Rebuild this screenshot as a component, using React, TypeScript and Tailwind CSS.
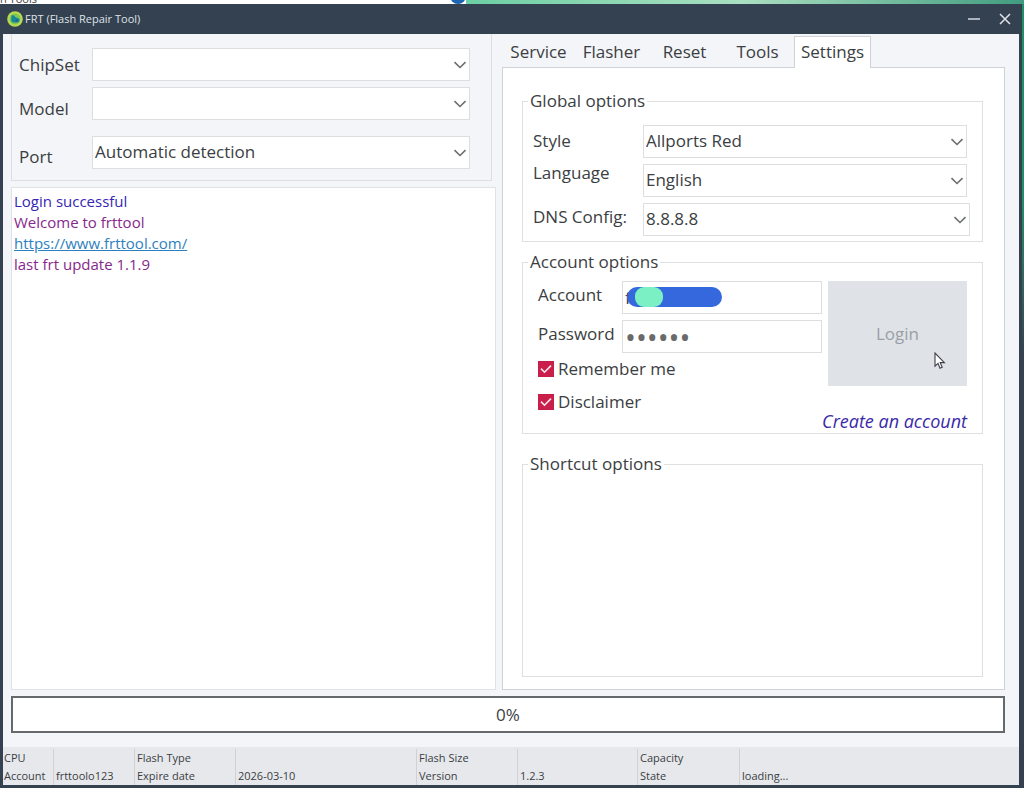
import { ChangeEvent, ReactNode, useState } from "react"
import clsx from "clsx"

const tabs = ["Service", "Flasher", "Reset", "Tools", "Settings"]

const statusRows = [
  ["CPU", "", "Flash Type", "", "Flash Size", "", "Capacity", ""],
  ["Account", "frttoolo123", "Expire date", "2026-03-10", "Version", "1.2.3", "State", "loading..."],
]

interface ComboProps {
  id: string
  options: string[]
}

function Combo({ id, options }: ComboProps) {
  return (
    <div className="relative">
      <select
        id={id}
        className="block h-[33px] w-full appearance-none border border-[#dcdee1] bg-white pr-8 pb-px pl-0.5 text-[17px] leading-6 outline-none"
      >
        {options.map((option) => (
          <option key={option}>{option}</option>
        ))}
      </select>
      <svg viewBox="0 0 14 8" className="pointer-events-none absolute top-[13px] right-[3px] h-2 w-3.5" fill="none" stroke="#6b6e72" strokeWidth="1.6">
        <path d="M1.5 1.2 7 6.5l5.5-5.3" />
      </svg>
    </div>
  )
}

interface GroupProps {
  title: string
  className?: string
  children?: ReactNode
}

function Group({ title, className, children }: GroupProps) {
  return (
    <fieldset className={clsx("border border-[#dddfe1]", className)}>
      <legend className="ml-[5px] px-0.5">{title}</legend>
      {children}
    </fieldset>
  )
}

interface CheckProps {
  label: string
}

function Check({ label }: CheckProps) {
  const [checked, setChecked] = useState(true)

  return (
    <label className="flex items-center gap-1">
      <span className="relative size-4">
        <input
          type="checkbox"
          checked={checked}
          onChange={() => setChecked(!checked)}
          className="block size-4 appearance-none border border-[#c41f48] bg-white checked:bg-[#cb1f4b]"
        />
        {checked && (
          <svg viewBox="0 0 16 16" className="pointer-events-none absolute inset-0 size-4" fill="none" stroke="#fbe9ee" strokeWidth="1.6">
            <path d="m3 7.6 3.5 3.6L13 4.6" />
          </svg>
        )}
      </span>
      {label}
    </label>
  )
}

function TitleBar() {
  return (
    <header className="flex h-[30px] items-center bg-[#344150] pr-2 pl-1 text-[#dfe3e8]">
      <svg viewBox="0 0 16 16" className="size-4">
        <circle cx="8" cy="8" r="7.8" fill="#b6d951" />
        <circle cx="8" cy="8" r="5.4" fill="#7cc653" />
        <path d="M4.5 4.5c2-.8 3.2-.2 3.6 1.6l4 1.6c.8 1.6.2 3.4-1.4 3.8H6c-1.4-.6-2-1.6-1.8-3.2z" fill="#17889a" />
        <path d="M8.6 8.6h2.6v2H8.6z" fill="#2a5f9e" />
      </svg>
      <h1 className="ml-0.5 flex-1 text-[11px] leading-4">FRT (Flash Repair Tool)</h1>
      <button aria-label="Minimize" className="mr-[19px]">
        <svg viewBox="0 0 12 12" className="size-3" stroke="currentColor" strokeWidth="1.4">
          <path d="M0 6h12" />
        </svg>
      </button>
      <button aria-label="Close">
        <svg viewBox="0 0 12 12" className="size-3" stroke="currentColor" strokeWidth="1.5">
          <path d="m1 1 10 10M11 1 1 11" />
        </svg>
      </button>
    </header>
  )
}

function DevicePanel() {
  return (
    <section className="mr-1 flex border-x border-b border-[#dcdfe2] pt-3.5 pr-[21px] pb-[11px] pl-[7px]">
      <div className="flex w-[73px] flex-col pt-[5px]">
        <label htmlFor="chipset">ChipSet</label>
        <label htmlFor="model" className="mt-5">Model</label>
        <label htmlFor="port" className="mt-6">Port</label>
      </div>
      <div className="flex flex-1 flex-col">
        <Combo id="chipset" options={[""]} />
        <div className="mt-1.5 mb-4">
          <Combo id="model" options={[""]} />
        </div>
        <Combo id="port" options={["Automatic detection"]} />
      </div>
    </section>
  )
}

function Log() {
  return (
    <section className="mt-1.5 flex-1 border border-[#e0e3e6] bg-white px-0.5 pt-[3px] text-[15px] leading-[21px] text-[#86288c]">
      <p className="text-[#3626b4]">Login successful</p>
      <p>Welcome to frttool</p>
      <p>
        <a href="https://www.frttool.com/" className="text-[#2e7fbe] underline">https://www.frttool.com/</a>
      </p>
      <p>last frt update 1.1.9</p>
    </section>
  )
}

function AccountOptions() {
  const [password, setPassword] = useState("123456")

  function handlePassword(e: ChangeEvent<HTMLInputElement>) {
    setPassword(e.target.value)
  }

  return (
    <Group title="Account options" className="mt-2">
      <div className="flex gap-1.5 px-[15px] pt-[7px]">
        <div className="flex-1">
          <div className="flex">
            <div className="flex w-[84px] flex-col gap-[15px] pt-0.5">
              <label htmlFor="account">Account</label>
              <label htmlFor="password">Password</label>
            </div>
            <div className="flex min-w-0 flex-1 flex-col gap-1.5">
              <div className="relative">
                <input id="account" defaultValue="f" className="block h-[33px] w-full border border-[#dcdee1] bg-white px-0.5 outline-none" />
                <div className="pointer-events-none absolute top-1.5 left-[5px] h-5 w-[95px] rounded-full bg-[#3568dd] pl-2">
                  <div className="h-5 w-7 rounded-[9px] bg-[#7af0c4]" />
                </div>
              </div>
              <input
                id="password"
                type="password"
                value={password}
                onChange={handlePassword}
                className="block h-[33px] w-full border border-[#dcdee1] bg-white px-0.5 text-[29px] leading-6 text-[#6a6a6a] outline-none"
              />
            </div>
          </div>
          <div className="mt-1 flex flex-col gap-[9px]">
            <Check label="Remember me" />
            <Check label="Disclaimer" />
          </div>
        </div>
        <div className="flex w-[139px] flex-col items-end gap-[23px]">
          <button disabled className="relative h-[105px] w-full bg-[#dfe3e8] text-[#9b9fa4]">
            Login
            <svg viewBox="0 0 12 18" className="absolute top-[71px] left-[106px] h-[18px] w-3" fill="#fff" stroke="#3c3f46" strokeWidth="1.1">
              <path d="M1 1v13.2l3-2.8 2 4.8 2.2-.9-2-4.7h4.2z" />
            </svg>
          </button>
          <a href="#" className="text-[18px] leading-6 whitespace-nowrap text-[#3a2aa8] italic">Create an account</a>
        </div>
      </div>
    </Group>
  )
}

function SettingsTab() {
  return (
    <div className="flex flex-1 flex-col border border-[#cfd2d6] bg-white px-[19px] pt-[21px] pr-[21px] pb-3">
      <Group title="Global options">
        <div className="flex pt-3 pr-3 pb-[5px] pl-2.5">
          <div className="flex w-[110px] flex-col pt-1">
            <label htmlFor="style">Style</label>
            <label htmlFor="language" className="mt-2">Language</label>
            <label htmlFor="dns" className="mt-5">DNS Config:</label>
          </div>
          <div className="flex flex-1 flex-col gap-1.5">
            <div className="mr-[3px]">
              <Combo id="style" options={["Allports Red"]} />
            </div>
            <div className="mr-[3px]">
              <Combo id="language" options={["English"]} />
            </div>
            <Combo id="dns" options={["8.8.8.8"]} />
          </div>
        </div>
      </Group>
      <AccountOptions />
      <Group title="Shortcut options" className="mt-[18px] flex-1" />
    </div>
  )
}

export default function App() {
  const [active, setActive] = useState("Settings")

  return (
    <div className="flex min-h-screen flex-col bg-[#34414f] font-['Open_Sans','Noto_Sans',sans-serif] text-[17px] leading-6 text-[#3b3e42]">
      {/* desktop behind the window */}
      <div className="flex h-1 items-end overflow-hidden bg-white text-[11px] leading-[10px]">
        <span className="flex-[449]">n Tools</span>
        <svg viewBox="0 0 16 4" className="h-1 w-4">
          <circle cx="8" cy="-4" r="8" fill="#1c64b4" />
        </svg>
        <div className="h-1 flex-[557] bg-linear-to-r from-[#6ccfa4] via-[#a9dfc0] to-[#3f9c80]" />
      </div>

      <div className="flex flex-1 bg-linear-to-b from-[#1f8f68] from-25% to-[#34414f] to-45% pr-0.5">
        <div className="flex flex-1 flex-col border-x-3 border-b-3 border-[#344150] bg-[#f3f5f8]">
          <TitleBar />

          <main className="flex flex-1 pr-3.5 pl-2">
            <div className="flex flex-[485] flex-col">
              <DevicePanel />
              <Log />
            </div>
            <div className="ml-1.5 flex flex-[503] flex-col">
              <div role="tablist" className="flex h-[33px] pt-0.5">
                {tabs.map((tab) => (
                  <button
                    key={tab}
                    role="tab"
                    aria-selected={tab === active}
                    onClick={() => setActive(tab)}
                    className={clsx(
                      "w-[73px]",
                      tab === active && "relative -mb-px w-[77px] border-x border-t border-[#cfd2d6] bg-white pb-0.5"
                    )}
                  >
                    {tab}
                  </button>
                ))}
              </div>
              <SettingsTab />
            </div>
          </main>

          <div role="progressbar" aria-valuenow={0} className="mt-1.5 mr-3.5 ml-2 flex h-[37px] items-center justify-center border-2 border-[#66696c] bg-white">
            0%
          </div>

          <footer className="mt-3.5 bg-[#e6e8ec] pt-0.5 pl-px text-[11px] leading-[18px]">
            {statusRows.map((row, i) => (
              <div key={i} className="grid grid-cols-[49fr_81fr_101fr_181fr_101fr_120fr_102fr_280fr]">
                {row.map((cell, j) => (
                  <span key={j} className={clsx("h-[18px] whitespace-nowrap", j > 0 && "border-l border-[#cfd1d5] pl-0.5")}>
                    {cell}
                  </span>
                ))}
              </div>
            ))}
          </footer>
        </div>
      </div>
    </div>
  )
}
